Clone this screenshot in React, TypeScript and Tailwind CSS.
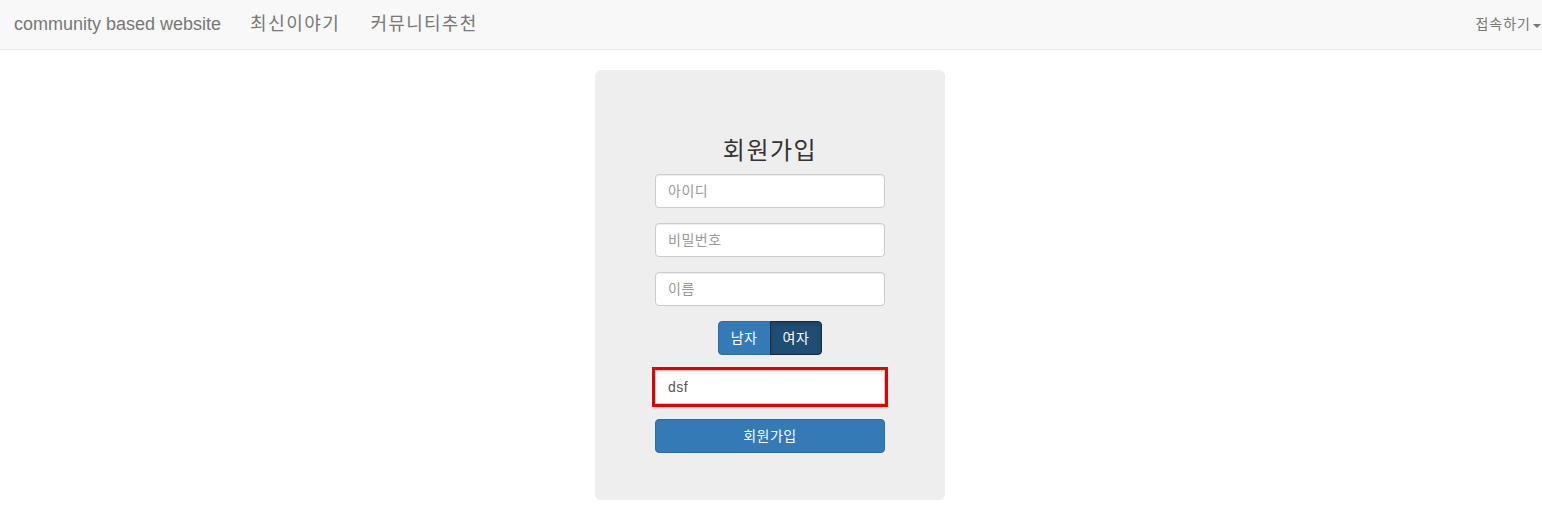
import { useState } from "react";

const font = { fontFamily: '"Liberation Sans", "Noto Sans CJK KR", sans-serif' };

export default function App() {
  const [gender, setGender] = useState<"m" | "f">("f");
  const [nick, setNick] = useState("dsf");

  const inputClass =
    "block h-[34px] w-[230px] rounded-[4px] border border-[#ccc] bg-white px-3 text-[14px] text-[#555] tracking-[0.5px] " +
    "shadow-[inset_0_1px_1px_rgba(0,0,0,0.075)] outline-none placeholder:text-[#999]";

  return (
    <div className="min-h-[509px] bg-white" style={font}>
      <nav className="flex h-[50px] items-center justify-between border-b border-[#e7e7e7] bg-[#f8f8f8]">
        <div className="flex items-center">
          <a className="px-[14px] text-[18px] text-[#777]">community based website</a>
          <a className="px-[15px] text-[18px] tracking-[1.5px] text-[#777]">최신이야기</a>
          <a className="px-[15px] text-[18px] tracking-[1.3px] text-[#777]">커뮤니티추천</a>
        </div>
        <a className="flex items-center gap-[2px] pr-[1px] text-[14px] tracking-[1px] text-[#777]">
          접속하기
          <span className="mt-[2px] inline-block h-0 w-0 border-x-[4px] border-t-[4px] border-x-transparent border-t-[#777]" />
        </a>
      </nav>

      <div className="pr-[2px]">
        <div className="mx-auto mt-[20px] flex w-[350px] flex-col items-center rounded-[6px] bg-[#eee] pb-[47px] pt-[67px]">
          <h2 className="mb-[10px] text-[24px] leading-[27px] tracking-[1.5px] text-[#333]">회원가입</h2>
          <input className={inputClass} placeholder="아이디" />
          <input className={inputClass + " mt-[15px]"} placeholder="비밀번호" type="text" />
          <input className={inputClass + " mt-[15px]"} placeholder="이름" />

          <div className="mt-[15px] flex">
            <button
              onClick={() => setGender("m")}
              className={
                "h-[34px] rounded-l-[4px] border px-[12px] text-[14px] tracking-[0.5px] text-white " +
                (gender === "m"
                  ? "border-[#122b40] bg-[#204d74] shadow-[inset_0_3px_5px_rgba(0,0,0,0.125)]"
                  : "border-[#2e6da4] bg-[#337ab7]")
              }
            >
              남자
            </button>
            <button
              onClick={() => setGender("f")}
              className={
                "-ml-px h-[34px] rounded-r-[4px] border px-[12px] text-[14px] tracking-[0.5px] text-white " +
                (gender === "f"
                  ? "border-[#122b40] bg-[#204d74] shadow-[inset_0_3px_5px_rgba(0,0,0,0.125)]"
                  : "border-[#2e6da4] bg-[#337ab7]")
              }
            >
              여자
            </button>
          </div>

          <input
            className={inputClass + " mt-[15px] rounded-none outline-3 outline-[#e00000] outline-solid"}
            value={nick}
            onChange={(e) => setNick(e.target.value)}
          />

          <button className="mt-[15px] h-[34px] w-[230px] rounded-[4px] border border-[#2e6da4] bg-[#337ab7] text-[14px] tracking-[0.5px] text-white">
            회원가입
          </button>
        </div>
      </div>
    </div>
  );
}
